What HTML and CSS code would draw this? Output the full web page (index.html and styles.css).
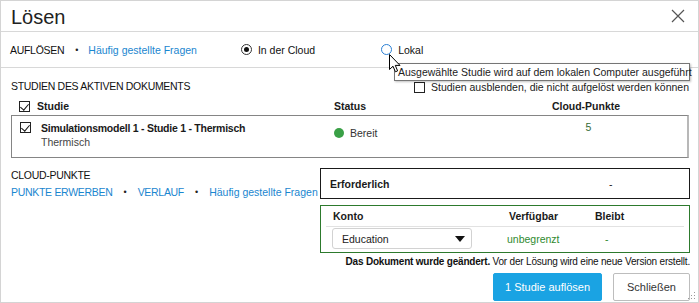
FILE: index.html
```html
<!DOCTYPE html>
<html lang="de">
<head>
<meta charset="utf-8">
<title>Lösen</title>
<link rel="stylesheet" href="styles.css">
</head>
<body>
<div class="dialog">
  <div class="header">
    <h1 class="title">Lösen</h1>
    <svg class="close" width="14" height="14" viewBox="0 0 14 14"><path d="M1 1L13 13M13 1L1 13" stroke="#555" stroke-width="1.2" fill="none"/></svg>
  </div>
  <div class="modebar">
    <span class="caps">AUFLÖSEN</span>
    <span class="dot">•</span>
    <a class="link">Häufig gestellte Fragen</a>
    <label class="radio radio-cloud"><span class="rb rb-on"></span>In der Cloud</label>
    <label class="radio radio-local"><span class="rb rb-hover"></span>Lokal</label>
  </div>
  <div class="studies">
    <div class="studies-top">
      <span class="caps">STUDIEN DES AKTIVEN DOKUMENTS</span>
      <label class="hide-opt"><span class="cb"></span>Studien ausblenden, die nicht aufgelöst werden können</label>
    </div>
    <div class="thead">
      <span class="cb cb-on"></span>
      <span class="col-name">Studie</span>
      <span class="col-status">Status</span>
      <span class="col-points">Cloud-Punkte</span>
    </div>
    <div class="tbox">
      <div class="trow">
        <span class="cb cb-on"></span>
        <div class="col-name">
          <div class="study-title">Simulationsmodell 1 - Studie 1 - Thermisch</div>
          <div class="study-sub">Thermisch</div>
        </div>
        <div class="col-status status-ok"><span class="gdot"></span>Bereit</div>
        <div class="col-points">5</div>
      </div>
    </div>
  </div>
  <div class="bottom">
    <div class="left">
      <div class="caps">CLOUD-PUNKTE</div>
      <div class="links">
        <a class="link caps-link">PUNKTE ERWERBEN</a>
        <span class="dot">•</span>
        <a class="link caps-link">VERLAUF</a>
        <span class="dot">•</span>
        <a class="link">Häufig gestellte Fragen</a>
      </div>
    </div>
    <div class="right">
      <div class="req">
        <span class="req-label">Erforderlich</span>
        <span class="req-val">-</span>
      </div>
      <div class="acct">
        <div class="acct-head">
          <span class="a-konto">Konto</span>
          <span class="a-verf">Verfügbar</span>
          <span class="a-bleibt">Bleibt</span>
        </div>
        <div class="acct-row">
          <div class="select"><span>Education</span><span class="caret"></span></div>
          <span class="a-verf green">unbegrenzt</span>
          <span class="a-bleibt green">-</span>
        </div>
      </div>
      <div class="note"><b>Das Dokument wurde geändert.</b> Vor der Lösung wird eine neue Version erstellt.</div>
      <div class="buttons">
        <button class="btn btn-primary">1 Studie auflösen</button>
        <button class="btn btn-secondary">Schließen</button>
      </div>
    </div>
  </div>
  <div class="tooltip">Ausgewählte Studie wird auf dem lokalen Computer ausgeführt</div>
  <svg class="cursor" width="12" height="19" viewBox="0 0 12 19"><path d="M0.5 0.5L0.5 15.5L4 12.2L6.4 17.8L8.6 16.9L6.3 11.4L11 11.4Z" fill="#fff" stroke="#000" stroke-width="1" stroke-linejoin="miter"/></svg>
  <svg class="grip" width="8" height="8" viewBox="0 0 8 8"><g fill="#999"><rect x="6" y="0" width="1" height="1"/><rect x="3" y="3" width="1" height="1"/><rect x="6" y="3" width="1" height="1"/><rect x="0" y="6" width="1" height="1"/><rect x="3" y="6" width="1" height="1"/><rect x="6" y="6" width="1" height="1"/></g></svg>
</div>
</body>
</html>
```

FILE: styles.css
```css
* { box-sizing: border-box; }
html, body { margin: 0; padding: 0; background: #fff; }
body {
  font-family: "Liberation Sans", Arial, sans-serif;
  font-size: 10.5px;
  color: #1a1a1a;
}
.dialog {
  position: relative;
  width: 699px;
  height: 303px;
  border: 1px solid #d4d4d4;
  overflow: hidden;
}
.header {
  height: 31px;
  border-bottom: 1px solid #d8d8d8;
  display: flex;
  align-items: center;
  justify-content: space-between;
  padding: 0 13px 0 10px;
}
.title {
  margin: 0;
  font-weight: normal;
  font-size: 20px;
  color: #222;
  line-height: 24px;
  padding-top: 1px;
}
.close { display: block; }
.modebar {
  height: 36px;
  border-bottom: 1px solid #d8d8d8;
  display: flex;
  align-items: center;
  padding-left: 9px;
  white-space: nowrap;
}
.modebar .dot { margin: 0 10px 0 11px; }
.caps { color: #111; letter-spacing: -0.3px; }
.caps-link { letter-spacing: -0.3px; }
.dot { margin: 0 12px; font-size: 9px; color: #222; }
.link { color: #1a86cf; text-decoration: none; }
.radio { display: flex; align-items: center; color: #111; }
.radio-cloud { margin-left: 44px; }
.radio-local { margin-left: 66px; }
.rb {
  width: 11px; height: 11px;
  border-radius: 50%;
  border: 1px solid #333;
  margin-right: 6px;
  position: relative;
  background: #fff;
}
.rb-on::after {
  content: "";
  position: absolute;
  left: 2px; top: 2px;
  width: 5px; height: 5px;
  border-radius: 50%;
  background: #111;
}
.rb-hover { border-color: #2a7fd4; }
.studies { padding: 12px 9px 0 10px; }
.studies-top {
  display: flex;
  justify-content: space-between;
  align-items: center;
  height: 12px;
}
.hide-opt { display: flex; align-items: center; margin-top: 2px; white-space: nowrap; }
.cb {
  width: 11px; height: 11px;
  border: 1px solid #222;
  background: #fff;
  position: relative;
  flex: none;
}
.hide-opt .cb { margin-right: 6px; }
.cb-on::after {
  content: "";
  position: absolute;
  left: 2px; top: 0px;
  width: 4px; height: 7px;
  border: solid #111;
  border-width: 0 1px 1px 0;
  transform: rotate(40deg);
}
.thead {
  display: flex;
  align-items: center;
  height: 18px;
  margin-top: 5px;
  padding-left: 8px;
  font-weight: bold;
}
.thead .col-name { margin-left: 7px; width: 297px; }
.col-status { width: 212px; }
.col-points { width: 80px; text-align: center; }
.tbox {
  border: 1px solid #858585;
  border-right: 2px solid #b8b8b8;
  height: 43px;
}
.trow {
  display: flex;
  align-items: flex-start;
  padding: 5px 0 0 8px;
}
.trow .cb { margin-top: 1px; }
.trow .col-name { margin-left: 10px; width: 293px; }
.study-title { font-weight: bold; line-height: 14px; letter-spacing: -0.25px; }
.study-sub { color: #444; line-height: 14px; }
.status-ok { display: flex; align-items: center; margin-top: 6px; color: #333; }
.gdot {
  width: 10px; height: 10px; border-radius: 50%;
  background: #3aa046;
  margin-right: 6px;
}
.trow .col-points { color: #356b35; line-height: 12px; padding-left: 5px; }
.bottom {
  display: flex;
  padding: 10px 8px 0 10px;
}
.left { flex: 1; min-width: 0; padding-top: 1px; white-space: nowrap; }
.links { margin-top: 5px; display: flex; align-items: center; }
.links .dot { margin: 0 11px; }
.right { width: 370px; flex: none; }
.req {
  height: 31px;
  border: 1.5px solid #1a1a1a;
  display: flex;
  align-items: center;
  padding-left: 9px;
}
.req-label { font-weight: bold; width: 279px; }
.acct {
  margin-top: 6px;
  border: 1.5px solid #2d7a2d;
  height: 48px;
  padding: 0 5px;
}
.acct-head {
  display: flex;
  align-items: center;
  height: 21px;
  border-bottom: 1px solid #e2e2e2;
  font-weight: bold;
  padding-left: 7px;
}
.a-konto { width: 176px; }
.a-verf { width: 86px; }
.a-bleibt { width: 40px; }
.acct-row {
  display: flex;
  align-items: center;
  height: 23px;
  padding-left: 6px;
}
.select {
  width: 140px; height: 21px;
  border: 1px solid #d2d2d2;
  border-radius: 3px;
  display: flex;
  align-items: center;
  justify-content: space-between;
  padding: 0 6px 0 9px;
  margin-right: 35px;
  color: #222;
}
.caret {
  width: 0; height: 0;
  border-left: 5px solid transparent;
  border-right: 5px solid transparent;
  border-top: 6px solid #111;
}
.green { color: #2f8a2f; }
.acct-row .a-bleibt { padding-left: 12px; }
.note {
  text-align: right;
  margin-top: 3px;
  font-size: 10px;
  letter-spacing: -0.2px;
  white-space: nowrap;
  color: #111;
  line-height: 12px;
}
.buttons {
  display: flex;
  justify-content: flex-end;
  gap: 11px;
  margin-top: 5px;
}
.btn {
  font-family: "Liberation Sans", Arial, sans-serif;
  font-size: 11px;
  height: 28px;
  border-radius: 2px;
  cursor: pointer;
}
.btn-primary {
  width: 109px;
  background: #1aa3e3;
  color: #fff;
  border: 1px solid #1aa3e3;
}
.btn-secondary {
  width: 77px;
  background: #fff;
  color: #333;
  border: 1px solid #bdbdbd;
}
.tooltip {
  position: absolute;
  left: 393px; top: 62px;
  width: 296px; height: 18px;
  background: #fff;
  border: 1px solid #767676;
  box-shadow: 1px 1px 2px rgba(0,0,0,0.25);
  font-size: 10.5px;
  line-height: 16px;
  padding-left: 3px;
  color: #222;
  white-space: nowrap;
}
.cursor { position: absolute; left: 388px; top: 53px; }
.grip { position: absolute; right: 2px; bottom: 2px; }
```
